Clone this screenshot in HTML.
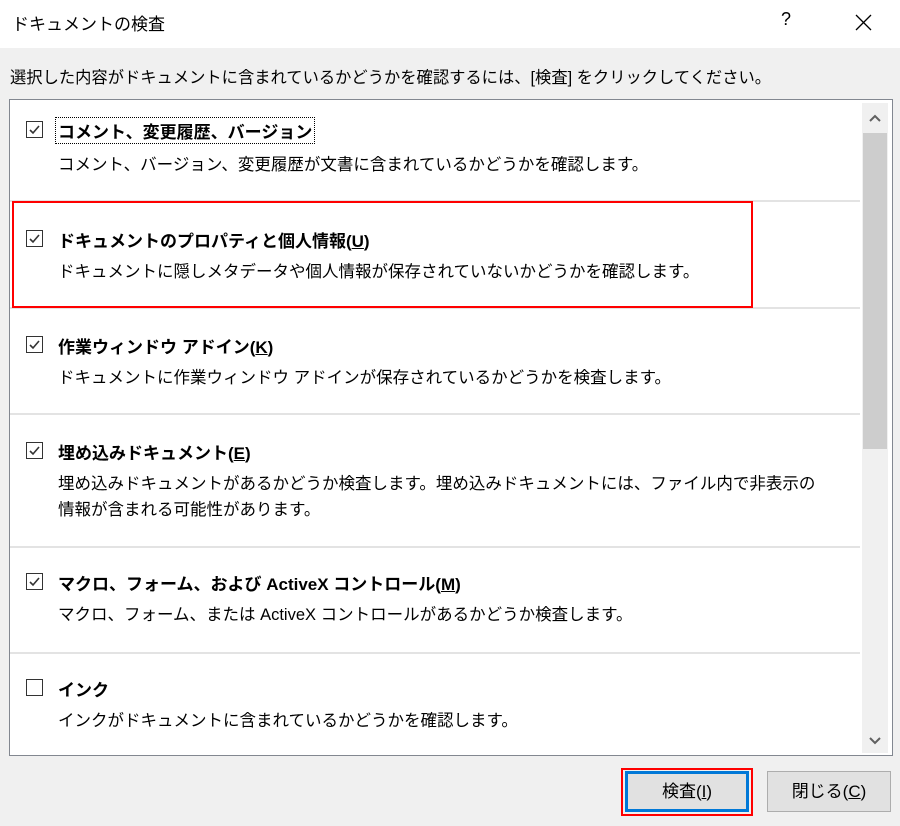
<!DOCTYPE html>
<html><head><meta charset="utf-8"><style>
*{margin:0;padding:0;box-sizing:border-box}
body{width:900px;height:826px;background:#f0f0f0;font-family:"Liberation Sans","Noto Sans CJK JP",sans-serif;color:#000;position:relative;overflow:hidden}
.title{position:absolute;left:0;top:0;width:900px;height:48px;background:#fff}
.title span{position:absolute;left:12px;top:10px;font-size:17px}
.q{position:absolute;left:781px;top:9px;font-size:18px}
.inst{position:absolute;left:10px;top:64px;font-size:16.3px;white-space:nowrap}
.list{position:absolute;left:9px;top:99px;width:884px;height:657px;background:#fff;border:1px solid #828790}
.sb{position:absolute;left:852px;top:3px;width:26px;height:650px;background:#f0f0f0}
.thumb{position:absolute;left:1px;top:30px;width:24px;height:316px;background:#cdcdcd}
.sep{position:absolute;left:0;width:850px;height:2px;background:#e3e3e3}
.it{position:absolute;left:16px}
.cb{position:absolute;left:0;width:17px;height:17px;border:1px solid #333;background:#fff}
.cb svg{position:absolute;left:1px;top:1px}
.h{position:absolute;left:32px;font-size:17px;font-weight:bold;white-space:nowrap}
.d{position:absolute;left:32px;font-size:16.5px;white-space:nowrap;line-height:26px}
.red{position:absolute;left:2px;top:101px;width:741px;height:107px;border:2px solid #f00}
.btn{position:absolute;top:771px;height:41px;background:#e1e1e1;border:1px solid #adadad;font-size:17px;text-align:center;line-height:39px}
</style></head><body>
<div class="title"><span>ドキュメントの検査</span><div class="q">?</div>
<svg style="position:absolute;left:855px;top:14px" width="17" height="17"><path d="M1 1L16 16M16 1L1 16" stroke="#000" stroke-width="1.3"/></svg></div>
<div class="inst">選択した内容がドキュメントに含まれているかどうかを確認するには、[検査] をクリックしてください。</div>
<div class="list">
 <div class="sep" style="top:100px"></div>
 <div class="sep" style="top:207px"></div>
 <div class="sep" style="top:313px"></div>
 <div class="sep" style="top:446px"></div>
 <div class="sep" style="top:552px"></div>
 <div class="red"></div>

 <div class="it" style="top:21px"><div class="cb"><svg width="13" height="13"><path d="M2 7l3 3 6-7" stroke="#333" stroke-width="1.6" fill="none"/></svg></div>
  <div class="h" style="top:-4px;border:1px dotted #000;padding:0 2px;left:29px">コメント、変更履歴、バージョン</div>
  <div class="d" style="top:31px">コメント、バージョン、変更履歴が文書に含まれているかどうかを確認します。</div></div>

 <div class="it" style="top:130px"><div class="cb"><svg width="13" height="13"><path d="M2 7l3 3 6-7" stroke="#333" stroke-width="1.6" fill="none"/></svg></div>
  <div class="h" style="top:-3px">ドキュメントのプロパティと個人情報(<u>U</u>)</div>
  <div class="d" style="top:29px">ドキュメントに隠しメタデータや個人情報が保存されていないかどうかを確認します。</div></div>

 <div class="it" style="top:236px"><div class="cb"><svg width="13" height="13"><path d="M2 7l3 3 6-7" stroke="#333" stroke-width="1.6" fill="none"/></svg></div>
  <div class="h" style="top:-3px">作業ウィンドウ アドイン(<u>K</u>)</div>
  <div class="d" style="top:29px">ドキュメントに作業ウィンドウ アドインが保存されているかどうかを検査します。</div></div>

 <div class="it" style="top:342px"><div class="cb"><svg width="13" height="13"><path d="M2 7l3 3 6-7" stroke="#333" stroke-width="1.6" fill="none"/></svg></div>
  <div class="h" style="top:-3px">埋め込みドキュメント(<u>E</u>)</div>
  <div class="d" style="top:29px">埋め込みドキュメントがあるかどうか検査します。埋め込みドキュメントには、ファイル内で非表示の<br>情報が含まれる可能性があります。</div></div>

 <div class="it" style="top:473px"><div class="cb"><svg width="13" height="13"><path d="M2 7l3 3 6-7" stroke="#333" stroke-width="1.6" fill="none"/></svg></div>
  <div class="h" style="top:-3px">マクロ、フォーム、および ActiveX コントロール(<u>M</u>)</div>
  <div class="d" style="top:29px">マクロ、フォーム、または ActiveX コントロールがあるかどうか検査します。</div></div>

 <div class="it" style="top:579px"><div class="cb"></div>
  <div class="h" style="top:-3px">インク</div>
  <div class="d" style="top:29px">インクがドキュメントに含まれているかどうかを確認します。</div></div>

 <div class="sb"><svg style="position:absolute;left:7px;top:11px" width="12" height="8"><path d="M1 7l5-5 5 5" stroke="#606060" stroke-width="2" fill="none"/></svg>
  <div class="thumb"></div>
  <svg style="position:absolute;left:7px;top:634px" width="12" height="8"><path d="M1 1l5 5 5-5" stroke="#606060" stroke-width="2" fill="none"/></svg></div>
</div>
<div style="position:absolute;left:621px;top:768px;width:132px;height:48px;border:2px solid #f00"></div>
<div class="btn" style="left:625px;width:124px;border:3px solid #0078d7;line-height:35px">検査(<u>I</u>)</div>
<div class="btn" style="left:767px;width:124px">閉じる(<u>C</u>)</div>
</body></html>
